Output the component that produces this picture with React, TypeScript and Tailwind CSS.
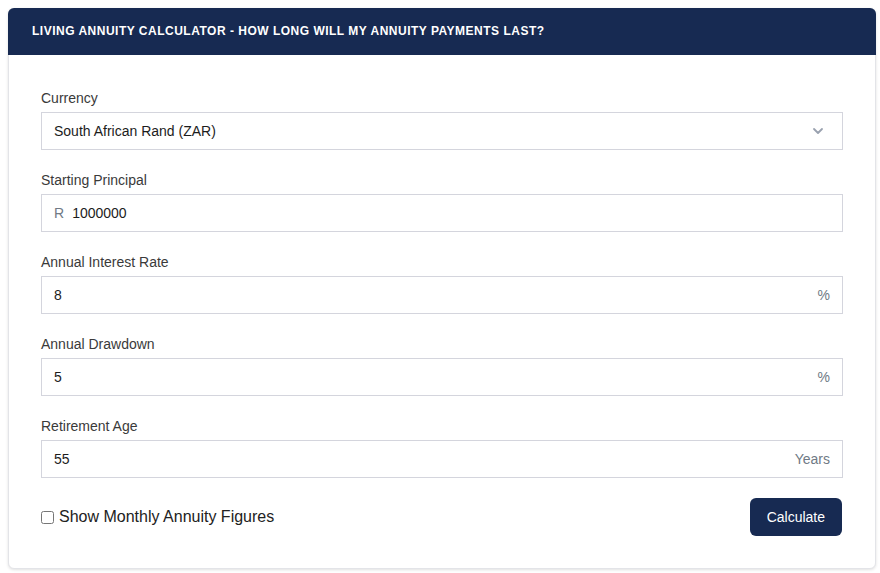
import { useState } from 'react';

type Field = {
  label: string;
  value: string;
  prefix?: string;
  suffix?: string;
};

const fields: Field[] = [
  { label: 'Starting Principal', value: '1000000', prefix: 'R' },
  { label: 'Annual Interest Rate', value: '8', suffix: '%' },
  { label: 'Annual Drawdown', value: '5', suffix: '%' },
  { label: 'Retirement Age', value: '55', suffix: 'Years' },
];

function ChevronDown() {
  return (
    <svg width="12" height="12" viewBox="0 0 12 12" fill="none" className="text-gray-400">
      <path d="M2 4l4 4 4-4" stroke="currentColor" strokeWidth="1.8" strokeLinecap="round" strokeLinejoin="round" />
    </svg>
  );
}

export default function App() {
  const [monthly, setMonthly] = useState(false);

  return (
    <div className="min-h-screen bg-white p-2 font-['Liberation_Sans',Arial,sans-serif]">
      <div className="rounded-md border border-[#e3e4e8] bg-white shadow-[0_1px_3px_rgba(0,0,0,0.12)] w-[868px]">
        <div className="h-[47px] rounded-t-md bg-[#172a52] flex items-center px-6 -mx-px -mt-px">
          <h1 className="text-[12px] font-bold tracking-[0.5px] text-white uppercase -mt-px">
            Living Annuity Calculator - How long will my annuity payments last?
          </h1>
        </div>

        <div className="px-8 pt-[33px] pb-[32px]">
          <div className="flex flex-col gap-5">
            <div>
              <label className="block text-sm leading-5 text-[#3a3a3a] mb-1">Currency</label>
              <div className="h-[38px] border border-[#d4d5dd] flex items-center justify-between px-3 text-sm text-[#1c1c1c]">
                <span>South African Rand (ZAR)</span>
                <span className="mr-1.5">
                  <ChevronDown />
                </span>
              </div>
            </div>

            {fields.map((f) => (
              <div key={f.label}>
                <label className="block text-sm leading-5 text-[#3a3a3a] mb-1">{f.label}</label>
                <div className="h-[38px] border border-[#d4d5dd] flex items-center px-3 text-sm">
                  {f.prefix && <span className="text-[#707a85] mr-2">{f.prefix}</span>}
                  <span className="flex-1 text-[#1c1c1c]">{f.value}</span>
                  {f.suffix && <span className="text-[#707a85]">{f.suffix}</span>}
                </div>
              </div>
            ))}

            <div className="flex items-center justify-between">
              <label className="flex items-center gap-[5px] text-base text-[#222] cursor-pointer">
                <input
                  type="checkbox"
                  checked={monthly}
                  onChange={(e) => setMonthly(e.target.checked)}
                  className="w-[13px] h-[13px] m-0"
                />
                Show Monthly Annuity Figures
              </label>
              <button className="h-[38px] px-[17px] mr-px rounded-md bg-[#172a52] text-white text-sm">
                Calculate
              </button>
            </div>
          </div>
        </div>
      </div>
    </div>
  );
}
